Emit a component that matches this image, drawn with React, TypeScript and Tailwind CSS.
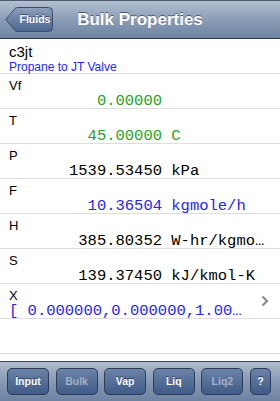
import React from "react";

type Prop = {
  label: string;
  num: string;
  unit?: string;
  color: string;
};

const props: Prop[] = [
  { label: "Vf", num: "0.00000", color: "text-[#1ea31e]" },
  { label: "T", num: "45.00000", unit: "C", color: "text-[#1ea31e]" },
  { label: "P", num: "1539.53450", unit: "kPa", color: "text-black" },
  { label: "F", num: "10.36504", unit: "kgmole/h", color: "text-[#2626f0]" },
  { label: "H", num: "385.80352", unit: "W-hr/kgmole", color: "text-black" },
  { label: "S", num: "139.37450", unit: "kJ/kmol-K", color: "text-black" },
];

const sans = "font-['Liberation_Sans',Arial,sans-serif]";
const mono = "font-['Liberation_Mono','Courier_New',monospace]";

function PropRow({ p }: { p: Prop }) {
  return (
    <div className="h-[35px] border-b border-[#dedede]">
      <div className={`${sans} pl-[9px] pt-[5px] text-[13px] leading-[13px] text-black`}>{p.label}</div>
      <div
        className={`${mono} ${p.color} pr-[10px] text-[15.5px] leading-[18px] whitespace-pre overflow-hidden text-ellipsis`}
      >
        <span className="inline-block w-[162px] text-right">{p.num}</span>
        {p.unit ? " " + p.unit : ""}
      </div>
    </div>
  );
}

function BarButton({ label, disabled, wide }: { label: string; disabled?: boolean; wide?: boolean }) {
  return (
    <div
      className={`${sans} ${wide ? "w-[42px]" : "w-[21px]"} h-[27px] rounded-[5px] border border-[#2c3c58] bg-gradient-to-b from-[#6a83a8] to-[#405b87] flex items-center justify-center text-[10.5px] font-bold ${
        disabled ? "text-[#a3b0c6]" : "text-white [text-shadow:0_-1px_0_#2a3a55]"
      }`}
    >
      {label}
    </div>
  );
}

export default function App() {
  return (
    <div className="w-[280px] h-[401px] flex flex-col bg-white overflow-hidden">
      {/* navigation bar */}
      <div className="relative h-[39px] shrink-0 border-t border-[#4f5c70] border-b border-b-[#2d3642] bg-gradient-to-b from-[#b4c0d1] via-[#8c9db6] to-[#6d83a2] flex items-center justify-center">
        <div className="absolute left-[5px] top-[6px] w-[48px] h-[25px]">
          <svg width="48" height="25" viewBox="0 0 48 25" className="absolute inset-0">
            <defs>
              <linearGradient id="bk" x1="0" y1="0" x2="0" y2="1">
                <stop offset="0" stopColor="#8ea1bd" />
                <stop offset="0.5" stopColor="#6a81a4" />
                <stop offset="1" stopColor="#4c6690" />
              </linearGradient>
            </defs>
            <path
              d="M0.8 12.5 L10 1.6 Q11 0.5 12.5 0.5 L43.5 0.5 Q47.5 0.5 47.5 4.5 L47.5 20.5 Q47.5 24.5 43.5 24.5 L12.5 24.5 Q11 24.5 10 23.4 Z"
              fill="url(#bk)"
              stroke="#3a4b68"
              strokeWidth="1"
            />
          </svg>
          <span
            className={`${sans} absolute left-[12px] right-0 top-0 h-[25px] flex items-center justify-center text-[10.5px] font-bold text-white [text-shadow:0_-1px_0_#34466a]`}
          >
            Fluids
          </span>
        </div>
        <span className={`${sans} text-[17px] font-bold text-white [text-shadow:0_-1px_0_#4a5a73]`}>
          Bulk Properties
        </span>
      </div>

      {/* table */}
      <div className="flex-1 flex flex-col">
        <div className="h-[35px] border-b border-[#dedede] pl-[9px] pt-[5px]">
          <div className={`${sans} text-[15px] leading-[16px] text-black`}>c3jt</div>
          <div className={`${sans} text-[12px] leading-[14px] text-[#1f1fff]`}>Propane to JT Valve</div>
        </div>
        {props.map((p) => (
          <PropRow key={p.label} p={p} />
        ))}
        <div className="h-[35px] border-b border-[#dedede] flex items-center">
          <div className="flex-1 min-w-0 self-start">
            <div className={`${sans} pl-[9px] pt-[5px] text-[13px] leading-[13px] text-black`}>X</div>
            <div
              className={`${mono} text-[#2626f0] pl-[9px] text-[15.5px] leading-[18px] whitespace-pre overflow-hidden text-ellipsis`}
            >
              [ 0.000000,0.000000,1.000000,0.000000]
            </div>
          </div>
          <svg width="8" height="12" viewBox="0 0 8 12" className="shrink-0 ml-[18px] mr-[11px]">
            <path d="M1.5 1.5 L6 6 L1.5 10.5" fill="none" stroke="#8a8a8f" strokeWidth="2.2" />
          </svg>
        </div>
        <div className="h-[35px] border-b border-[#dedede]" />
      </div>

      {/* toolbar */}
      <div className="h-[40px] shrink-0 border-t border-[#3b4657] bg-gradient-to-b from-[#b0bccd] via-[#8799b3] to-[#6d83a2] flex items-center justify-between pl-[7px] pr-[9px]">
        <BarButton label="Input" wide />
        <BarButton label="Bulk" wide disabled />
        <BarButton label="Vap" wide />
        <BarButton label="Liq" wide />
        <BarButton label="Liq2" wide disabled />
        <BarButton label="?" />
      </div>
    </div>
  );
}
